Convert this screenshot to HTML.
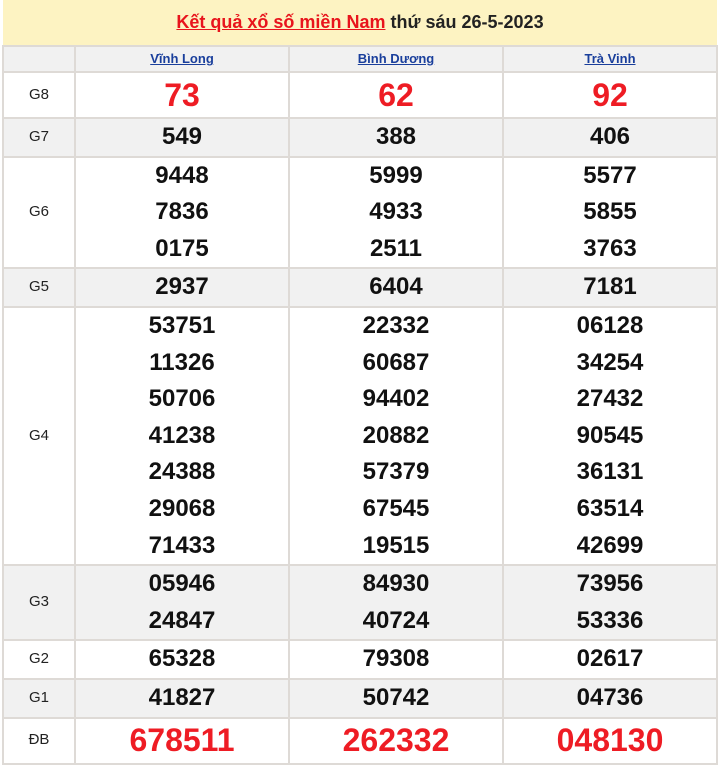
<!DOCTYPE html>
<html><head><meta charset="utf-8"><style>
body{margin:0;background:#fff;font-family:"Liberation Sans",Arial,sans-serif;width:720px;height:762px;overflow:hidden}
.hd{position:absolute;left:3px;top:0;width:714px;height:45px;background:#fdf3c2;text-align:center;line-height:44px;font-size:18px;font-weight:bold;color:#222}
.hd a{color:#e8141c;text-decoration:underline}
table{position:absolute;left:2px;top:45px;border-collapse:collapse;width:714px;table-layout:fixed}
td{border:2px solid #dedad6;text-align:center;padding:0;font-weight:bold;font-size:24px;color:#111;line-height:36.6px}
td.l{font-weight:normal;font-size:15px;color:#222}
tr.g td{background:#f1f1f1}
.h td{height:24px;line-height:24px;font-size:13px;background:#f1f1f1}
.h a{color:#1a3f9c;text-decoration:underline}
.r{color:#ee1c24;font-size:32px}
.big{color:#ee1c24;font-size:32px}
</style></head><body>
<div class="hd"><a>Kết quả xổ số miền Nam</a> thứ sáu 26-5-2023</div>
<table>
<colgroup><col style="width:72px"><col style="width:214px"><col style="width:214px"><col style="width:214px"></colgroup>
<tr class="h"><td class="l"></td><td><a>Vĩnh Long</a></td><td><a>Bình Dương</a></td><td><a>Trà Vinh</a></td></tr>
<tr><td class="l" style="height:44px">G8</td><td class="r">73</td><td class="r">62</td><td class="r">92</td></tr>
<tr class="g"><td class="l">G7</td><td>549</td><td>388</td><td>406</td></tr>
<tr><td class="l">G6</td><td>9448<br>7836<br>0175</td><td>5999<br>4933<br>2511</td><td>5577<br>5855<br>3763</td></tr>
<tr class="g"><td class="l">G5</td><td>2937</td><td>6404</td><td>7181</td></tr>
<tr><td class="l">G4</td><td>53751<br>11326<br>50706<br>41238<br>24388<br>29068<br>71433</td><td>22332<br>60687<br>94402<br>20882<br>57379<br>67545<br>19515</td><td>06128<br>34254<br>27432<br>90545<br>36131<br>63514<br>42699</td></tr>
<tr class="g"><td class="l">G3</td><td>05946<br>24847</td><td>84930<br>40724</td><td>73956<br>53336</td></tr>
<tr><td class="l">G2</td><td>65328</td><td>79308</td><td>02617</td></tr>
<tr class="g"><td class="l">G1</td><td>41827</td><td>50742</td><td>04736</td></tr>
<tr><td class="l" style="height:44px">ĐB</td><td class="big">678511</td><td class="big">262332</td><td class="big">048130</td></tr>
</table>
</body></html>
